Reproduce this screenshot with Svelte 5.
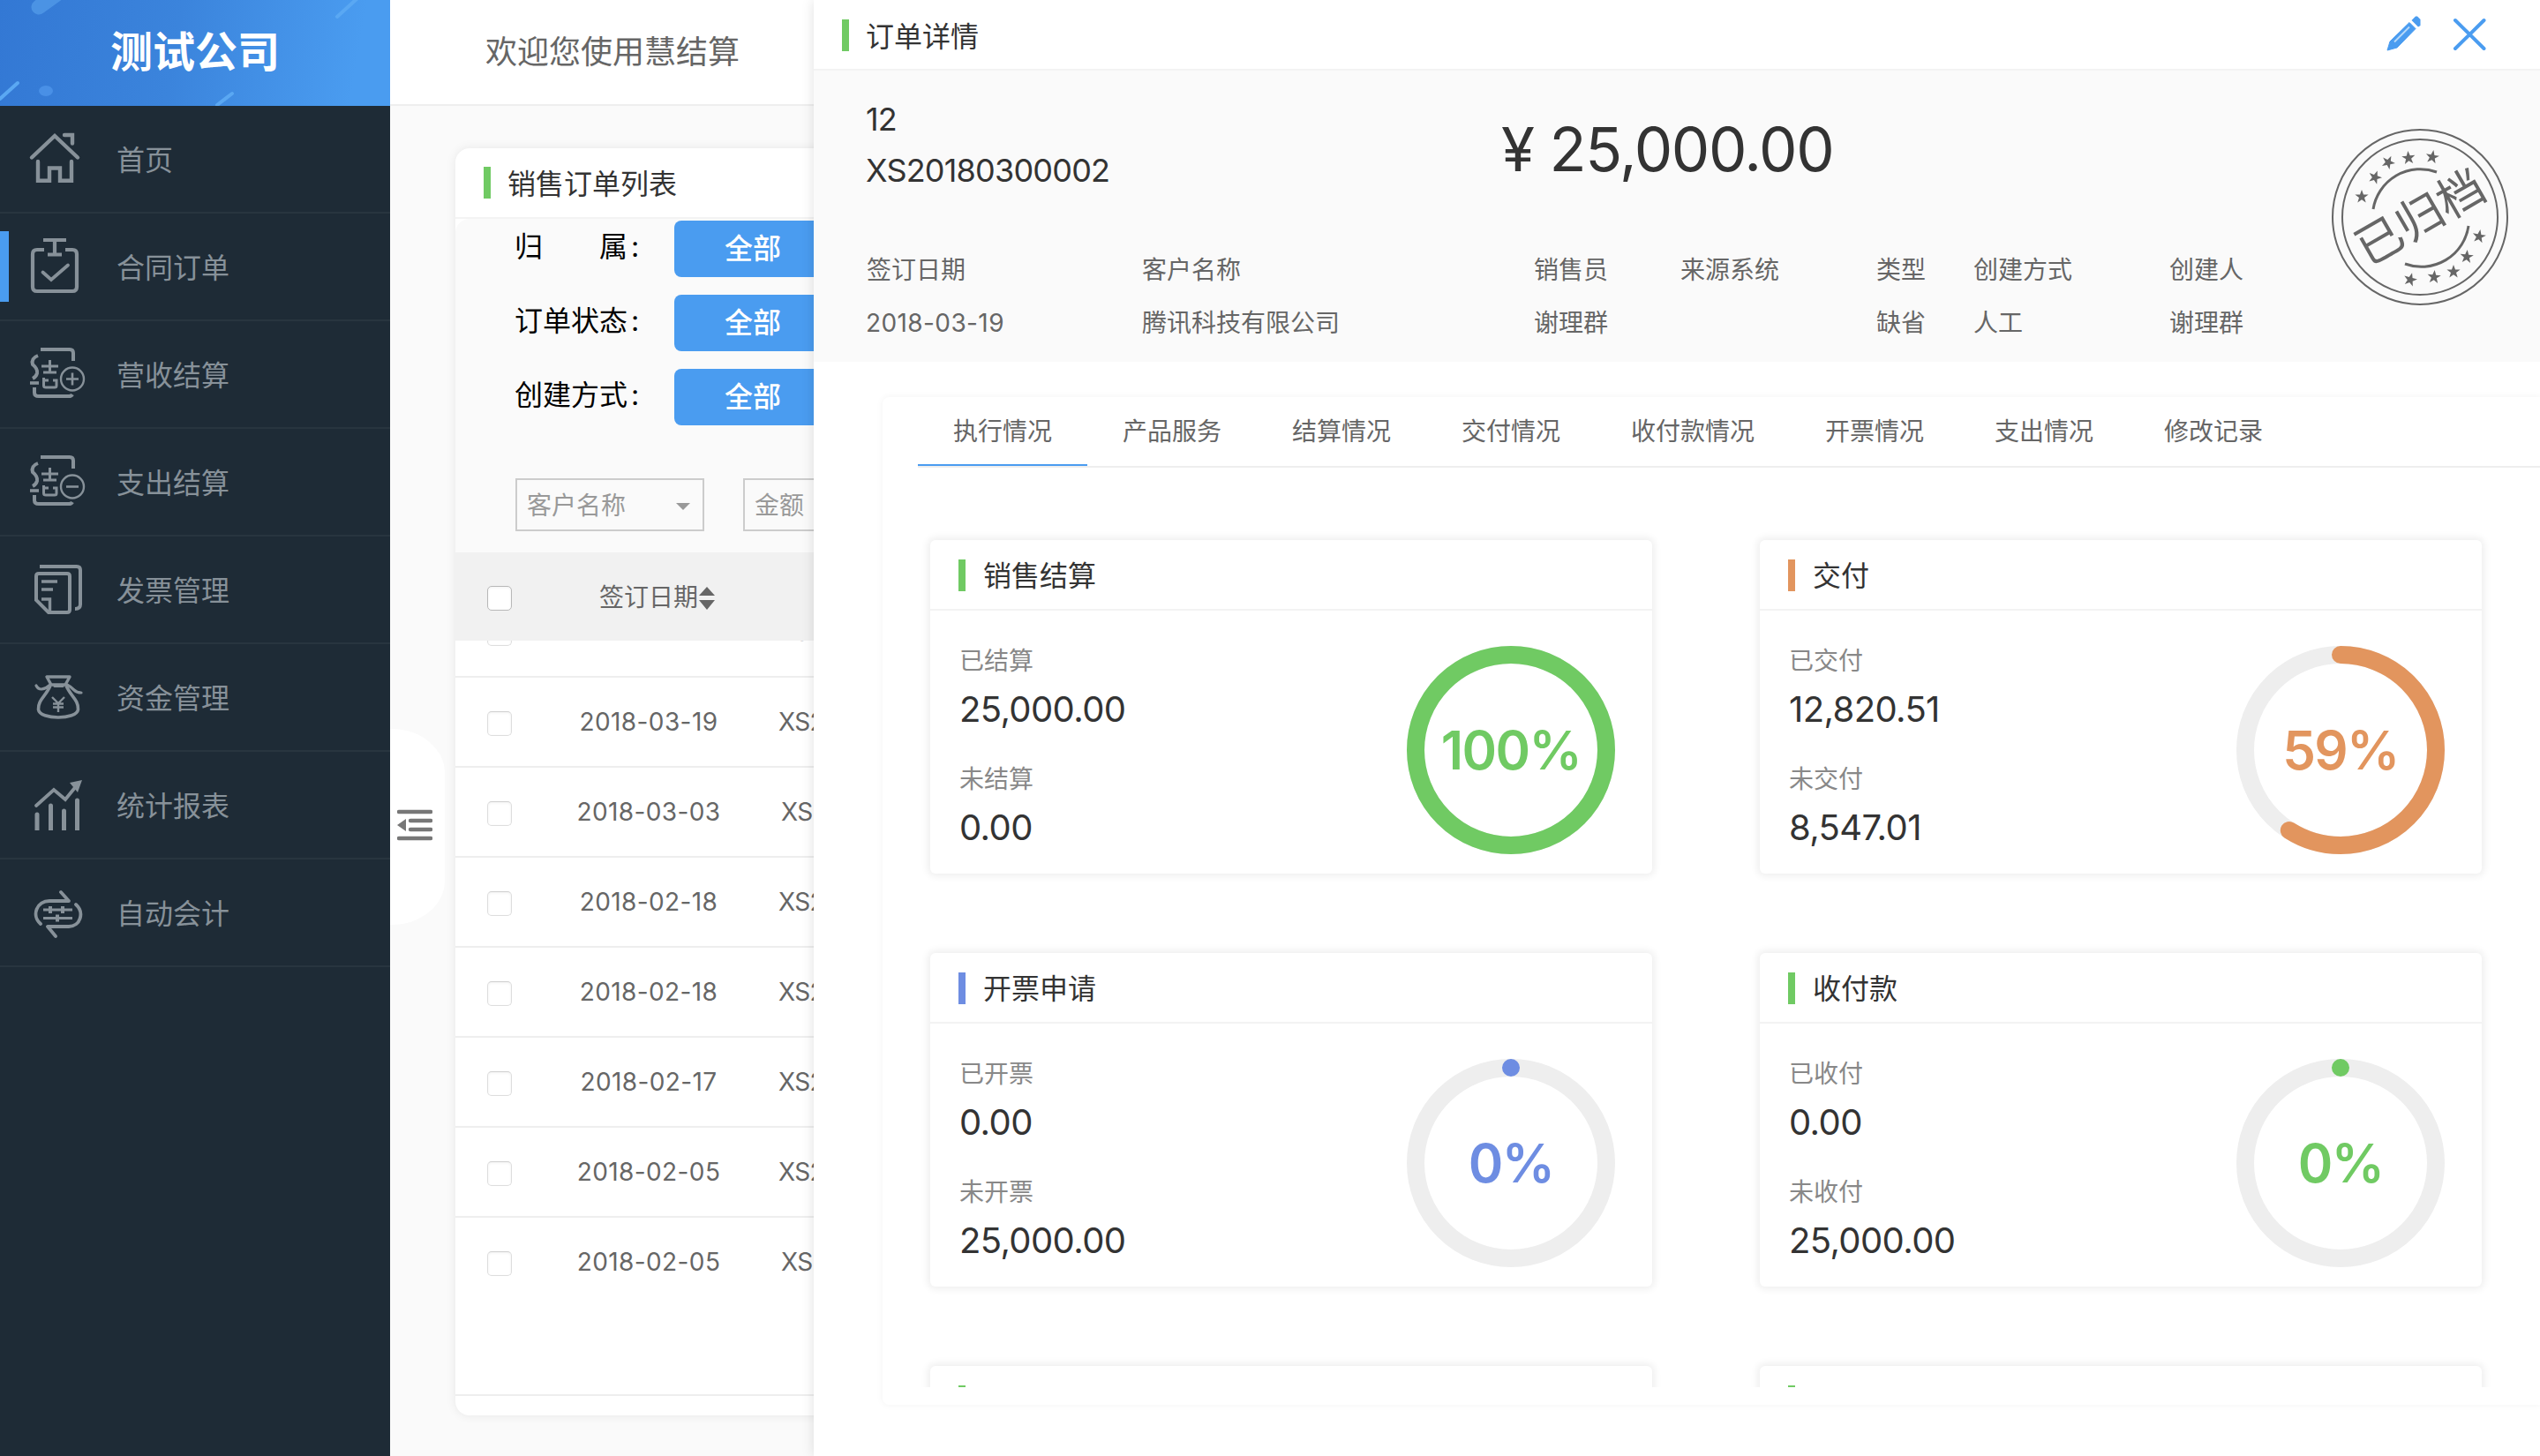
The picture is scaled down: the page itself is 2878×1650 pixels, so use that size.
<script>
  const menu = [
    { label: '首页', icon: 'home' },
    { label: '合同订单', icon: 'contract', active: true },
    { label: '营收结算', icon: 'income' },
    { label: '支出结算', icon: 'expense' },
    { label: '发票管理', icon: 'invoice' },
    { label: '资金管理', icon: 'fund' },
    { label: '统计报表', icon: 'report' },
    { label: '自动会计', icon: 'auto' },
  ];
  const filters = [
    { label: '归属', split: true },
    { label: '订单状态' },
    { label: '创建方式' },
  ];
  const rows = [
    { date: '2018-03-19', no: 'XS20180300002' },
    { date: '2018-03-19', no: 'XS20180300002' },
    { date: '2018-03-03', no: 'XS20180300001', shift: true },
    { date: '2018-02-18', no: 'XS20180200004' },
    { date: '2018-02-18', no: 'XS20180200003' },
    { date: '2018-02-17', no: 'XS20180200002' },
    { date: '2018-02-05', no: 'XS20180200005' },
    { date: '2018-02-05', no: 'XS20180200001', shift: true },
  ];
  const fields = [
    { k: '签订日期', v: '2018-03-19', num: true },
    { k: '客户名称', v: '腾讯科技有限公司' },
    { k: '销售员', v: '谢理群' },
    { k: '来源系统', v: '' },
    { k: '类型', v: '缺省' },
    { k: '创建方式', v: '人工' },
    { k: '创建人', v: '谢理群' },
  ];
  const tabs = ['执行情况', '产品服务', '结算情况', '交付情况', '收付款情况', '开票情况', '支出情况', '修改记录'];
  const cards = [
    { title: '销售结算', a: '已结算', av: '25,000.00', b: '未结算', bv: '0.00', pct: 100, tone: 'green' },
    { title: '交付', a: '已交付', av: '12,820.51', b: '未交付', bv: '8,547.01', pct: 59, tone: 'orange' },
    { title: '开票申请', a: '已开票', av: '0.00', b: '未开票', bv: '25,000.00', pct: 0, tone: 'blue' },
    { title: '收付款', a: '已收付', av: '0.00', b: '未收付', bv: '25,000.00', pct: 0, tone: 'green' },
    { title: '', tone: 'green' },
    { title: '', tone: 'green' },
  ];
  const R = 108;
  const C = 2 * Math.PI * R;
  const dash = (p) => `${Math.max((C * p) / 100, 0.01)} ${C * 2}`;
  // star centres inside the 200x200 stamp, with rotation
  const stars = [
    [34, 77, 0], [49, 55, 20], [64, 38, 25], [87, 33, -5], [114, 32, 10],
    [167, 122, 10], [153, 145, 5], [138, 162, 0], [116, 168, 5], [89, 171, 15],
  ];
</script>

{#snippet knot()}
  <path d="M46 -1H79Q83 -1 83 3V12" transform="translate(0 1)" stroke-width="4" />
  <path d="M43 7Q35 10 37 17Q43 22 42 27Q41 31 37 33" stroke-width="4" />
  <path d="M34 38H44" stroke-width="3.6" />
  <path d="M39 43V49Q39 53 44 53H78Q81 53 82 51" stroke-width="4" />
  <path d="M47 19H66M56.500 12V26M49 26H64" stroke-width="3" />
  <path d="M49.500 32V41Q49.500 43 52 43H62Q64 43 64 41V35H60M49.500 35H55" stroke-width="3" />
  <circle cx="82" cy="33.500" r="13" stroke-width="2.400" />
{/snippet}

<div class="app">
  <aside class="side">
    <div class="brand">
      <svg class="deco" viewBox="0 0 442 120">
        <path d="M44 8L66 -8" stroke="#4b93e4" stroke-width="17" stroke-linecap="round" />
        <path d="M382 19L404 -1M246 119L263 106M0 112L20 94" stroke="#5aa8f3" stroke-width="4" stroke-linecap="round" />
        <ellipse cx="52" cy="103" rx="8" ry="6" fill="#4990e6" />
      </svg>
      <span>测试公司</span>
    </div>
    {#each menu as m}
      <div class="item" class:active={m.active}>
        <svg class="mi" viewBox="30 0 70 62" fill="none">
          {#if m.icon === 'home'}
            <path d="M36 29.500L62 5L88 29.500" stroke-width="4.400" stroke-linecap="round" />
            <path d="M73 4H82V13.500" stroke-width="4.400" stroke-linecap="round" />
            <path d="M43 34V55.800H56V41.500H68V55.800H81V34" stroke-width="4.400" stroke-linecap="round" />
          {:else if m.icon === 'contract'}
            <path d="M50 12H42Q37 12 37 17V54Q37 59 42 59H82Q87 59 87 54V17Q87 12 82 12H74" stroke-width="4.200" />
            <path d="M49 1H75M62 1V17.500M54 17.500H70" stroke-width="4.200" />
            <path d="M48.500 37.500L58 46L77 29.500" stroke-width="3.800" stroke-linecap="round" />
          {:else if m.icon === 'income'}
            <g transform="translate(0 3)">{@render knot()}<path d="M75 33.500H89M82 26.500V40.500" stroke-width="2.600" /></g>
          {:else if m.icon === 'expense'}
            <g transform="translate(0 3)">{@render knot()}<path d="M75 33.500H89" stroke-width="2.600" /></g>
          {:else if m.icon === 'invoice'}
            <path d="M45 5H87Q91 5 91 9V48Q91 53 85 53" stroke-width="4" />
            <path d="M44 13H76Q79 13 79 16V54Q79 57 76 57H55L41 43V16Q41 13 44 13Z" stroke-width="4" />
            <path d="M47 22H65M47 31H60M47 42H56.500V55" stroke-width="3.400" />
          {:else if m.icon === 'fund'}
            <path d="M53 8H79L74 17H58Z" stroke-width="3.400" stroke-linejoin="round" />
            <path d="M57 18C52 30 43 34 43.500 45C45 57 87 57 88.500 45C89 34 80 30 75 18" stroke-width="3.600" />
            <path d="M62 18.500H71M41 18Q43 22 47 22Q53 21 57 17M76 17Q80 19 84 23Q87 26 92 26" stroke-width="3.200" stroke-linecap="round" />
            <path d="M59 31L66 38L73 31M60 38.500H72M60 42.500H72M66 38V48" stroke-width="2.400" />
          {:else if m.icon === 'report'}
            <path d="M42 60V42M57.500 60V32M72.500 60V38M87.500 60V26" stroke-width="5" stroke-linecap="round" />
            <path d="M41 32L61 14L74 25L87 9" stroke-width="3.800" stroke-linecap="round" />
            <path d="M93 3L79 6L88 17Z" fill="#879199" stroke="none" />
            <rect x="36" y="60" width="60" height="5" fill="#1e2b36" stroke="none" />
          {:else}
            <g transform="translate(0 -4)">
              <path d="M46 48C35 38 42 22 56 22H78L69 12M63 62L54 51H78C91 51 96 35 86 26" stroke-width="3.800" stroke-linecap="round" stroke-linejoin="round" />
              <path d="M49 32H82M49 41.500H82" stroke-width="3" />
              <path d="M57 28V36M71 28V36M65 37.500V45.500" stroke-width="4" />
            </g>
          {/if}
        </svg>
        <span>{m.label}</span>
      </div>
    {/each}
  </aside>

  <main class="main">
    <header class="welcome">欢迎您使用慧结算</header>
    <section class="list">
      <h2 class="head"><i class="bar green"></i><span>销售订单列表</span></h2>
      <div class="filters">
        {#each filters as f}
          <div class="filter">
            <span class="flabel">{#if f.split}<b>归</b><b>属</b>{:else}<b>{f.label}</b>{/if}</span>
            <span class="colon">:</span>
            <button class="all">全部</button>
          </div>
        {/each}
        <div class="selects">
          <div class="select"><span>客户名称</span><svg viewBox="0 0 16 8"><path d="M0 0H16L8 8Z" fill="#999" /></svg></div>
          <div class="select"><span>金额</span></div>
        </div>
      </div>
      <div class="thead">
        <i class="check dark"></i>
        <span class="th">签订日期<svg viewBox="0 0 18 26"><path d="M9 0L18 10H0ZM9 26L0 15H18Z" fill="#666" /></svg></span>
      </div>
      <div class="tbody">
        <div class="scroll">
          {#each rows as r}
            <div class="row">
              <i class="check"></i>
              <span class="date">{r.date}</span>
              <span class="no" class:shift={r.shift}>{r.no}</span>
            </div>
          {/each}
        </div>
      </div>
      <div class="foot"></div>
    </section>
    <div class="toggle">
      <svg viewBox="0 0 40 36"><path d="M2 3H38M15 13H38M15 23H38M2 33H38" stroke="#777" stroke-width="4.400" stroke-linecap="round" /><path d="M0 18L10 11V25Z" fill="#777" /></svg>
    </div>
  </main>

  <section class="drawer">
    <header class="dhead">
      <i class="bar green"></i><span class="dtitle">订单详情</span>
      <svg class="pen" viewBox="0 0 40 40">
        <path d="M1 39L4 29L26 7.500L33 14.500L12 36Z" fill="#4a9cf0" stroke="#4a9cf0" stroke-width="1" stroke-linejoin="round" />
        <path d="M28.500 5L33 0.500H35L38.500 4V11L36 12.500Z" fill="#4a9cf0" />
        <path d="M9 29.500L26 12.500" stroke="#b9daf9" stroke-width="1.800" />
      </svg>
      <svg class="close" viewBox="0 0 40 40"><path d="M3 4L35.500 36M35.500 4L3 36" stroke="#4a9cf0" stroke-width="4" stroke-linecap="round" /></svg>
    </header>
    <div class="summary">
      <div class="top">
        <div class="ids"><span>12</span><span>XS20180300002</span></div>
        <div class="amount">¥ 25,000.00</div>
      </div>
      <div class="fields">
        {#each fields as f}
          <div class="field"><span>{f.k}</span><span class:num={f.num}>{f.v}</span></div>
        {/each}
      </div>
      <svg class="stamp" viewBox="0 0 200 200" fill="none" stroke="#666">
        <circle cx="100" cy="100" r="99" stroke-width="2" />
        <circle cx="100" cy="100" r="88" stroke-width="2" />
        <path d="M47 91A54 54 0 0 1 119 49M83 153A54 54 0 0 0 155 110" stroke-width="3" />
        {#each stars as [x, y, a]}
          <path transform="translate({x} {y}) rotate({a})" fill="#666" stroke="none" d="M0 -8L2 -2.500L7.600 -2.500L3 1L4.700 6.500L0 3.200L-4.700 6.500L-3 1L-7.600 -2.500L-2 -2.500Z" />
        {/each}
        <text x="100" y="119" transform="rotate(-30 100 100)" text-anchor="middle" fill="#666" stroke="none">已归档</text>
      </svg>
    </div>
    <div class="panel">
      <nav class="tabs">
        {#each tabs as t, i}<span class:on={i === 0}>{t}</span>{/each}
      </nav>
      <div class="cards">
        {#each cards as c}
          <article class="card {c.tone}">
            <h3><i class="bar"></i><span>{c.title}</span></h3>
            {#if c.a}
              <div class="body">
                <div class="nums">
                  <span class="k">{c.a}</span><span class="v">{c.av}</span>
                  <span class="k">{c.b}</span><span class="v">{c.bv}</span>
                </div>
                <div class="donut">
                  <svg viewBox="0 0 236 236" fill="none" stroke-width="20">
                    <circle cx="118" cy="118" r={R} stroke="#eee" />
                    <circle cx="118" cy="118" r={R} stroke="currentColor" stroke-linecap="round" stroke-dasharray={dash(c.pct)} transform="rotate(-90 118 118)" />
                  </svg>
                  <span>{c.pct}%</span>
                </div>
              </div>
            {/if}
          </article>
        {/each}
      </div>
    </div>
  </section>
</div>

<style>
  :global(body) { margin: 0; overflow: hidden; }
  .app {
    position: relative; display: flex; width: 2878px; height: 1650px; overflow: hidden;
    background: #fafafa; color: #333; font-family: Inter, 'Noto Sans CJK SC', sans-serif; font-size: 28px;
  }
  .app * { box-sizing: border-box; }
  svg { display: block; flex: none; }
  span, h2, h3 { white-space: nowrap; }

  .side { width: 442px; flex: none; background: #1e2b36; }
  .brand {
    position: relative; height: 120px; display: flex; align-items: center; justify-content: center;
    background: linear-gradient(100deg, #3378d4 0%, #3b84dc 45%, #4a9cf0 90%);
    color: #fff; font-size: 48px; font-weight: 700; line-height: 116px; padding-bottom: 2px;
  }
  .brand span { position: relative; }
  .deco { position: absolute; inset: 0; width: 442px; height: 120px; }
  .item {
    position: relative; height: 122px; border-bottom: 2px solid #28353f; display: flex; align-items: center;
    padding-left: 30px; gap: 32px; color: #879199; font-size: 32px;
  }
  .item span { padding-bottom: 3px; }
  .item.active::before { content: ''; position: absolute; left: 0; top: 20px; width: 10px; height: 80px; background: #4a9cf0; }
  .mi { width: 70px; height: 62px; stroke: #879199; overflow: visible; }

  .main { position: relative; width: 2436px; flex: none; }
  .welcome { height: 120px; border-bottom: 2px solid #eee; background: #fff; padding-left: 108px; font-size: 36px; line-height: 118px; color: #666; }
  .list { margin: 48px 0 0 74px; height: 1436px; border-radius: 16px; background: #fff; box-shadow: 0 0 12px rgba(0, 0, 0, .08); overflow: hidden; display: flex; flex-direction: column; }
  .head { margin: 0; height: 80px; border-bottom: 2px solid #f3f3f3; padding-left: 32px; display: flex; align-items: center; gap: 19px; font-size: 32px; font-weight: 400; flex: none; }
  .head span { padding-bottom: 2px; }
  .bar { width: 8px; height: 36px; flex: none; background: currentColor; }
  .bar.green { background: #70ca63; }
  .filters { height: 378px; flex: none; border-radius: 16px 0 0 0; background: #fafafa; padding: 2px 0 0 68px; }
  .filter { display: flex; height: 64px; margin-bottom: 20px; color: #000; font-size: 32px; line-height: 60px; }
  .flabel { width: 128px; margin-left: -1px; display: flex; justify-content: space-between; }
  .flabel b { font-weight: 400; }
  .colon { width: 53px; padding-left: 4px; }
  .all { width: 178px; height: 64px; border: 0; border-radius: 8px; background: #4a9cf0; color: #fff; font: 500 32px/62px Inter, 'Noto Sans CJK SC', sans-serif; padding: 0; }
  .selects { display: flex; gap: 44px; padding-top: 40px; }
  .filters .selects { margin-top: 0; padding-top: 40px; }
  .select { width: 214px; height: 60px; border: 2px solid #ccc; padding: 0 14px 0 11px; display: flex; align-items: center; justify-content: space-between; color: #999; }
  .select span { padding-bottom: 2px; }
  .select svg { width: 16px; height: 8px; margin-top: 4px; }
  .thead { height: 100px; flex: none; background: #f1f1f1; display: flex; align-items: center; color: #666; padding-left: 36px; }
  .check { width: 28px; height: 28px; border: 1px solid #ddd; border-top-color: #d0d0d0; border-radius: 5px; background: #fff; box-shadow: inset 0 1px 3px rgba(0, 0, 0, .06); flex: none; margin-top: 4px; }
  .check.dark { border-color: #b8b8b8; }
  .th { display: flex; align-items: center; margin-left: 99px; gap: 1px; padding-bottom: 2px; }
  .th svg { width: 18px; height: 26px; margin-top: 5px; }
  .tbody { height: 854px; flex: none; overflow: hidden; }
  .scroll { margin-top: -60px; }
  .row { height: 102px; border-bottom: 2px solid #eee; display: flex; align-items: center; padding-left: 36px; color: #666; }
  .row:last-child { border-color: transparent; }
  .date { width: 310px; text-align: center; letter-spacing: .4px; }
  .no { margin-left: -8px; letter-spacing: -.6px; }
  .no.shift { margin-left: -5px; }
  .foot { border-top: 2px solid #eee; flex: 1; }
  .toggle { position: absolute; left: 0; top: 826px; width: 62px; height: 222px; background: #fff; border-radius: 0 60px 60px 0 / 0 50px 50px 0; display: flex; align-items: center; padding-left: 8px; }
  .toggle svg { width: 40px; height: 36px; margin-top: -4px; }

  .drawer { position: absolute; left: 922px; top: 0; width: 1956px; height: 1650px; background: #fff; box-shadow: 0 0 14px rgba(0, 0, 0, .12); }
  .dhead { height: 80px; border-bottom: 2px solid #f3f3f3; display: flex; align-items: center; padding: 2px 59px 0 32px; }
  .dtitle { margin-left: 19px; font-size: 32px; flex: 1; padding-bottom: 2px; }
  .pen { width: 40px; height: 40px; margin-right: 35px; margin-top: -4px; }
  .close { width: 40px; height: 40px; margin-top: -2px; }
  .summary { position: relative; height: 330px; background: #fafafa; padding: 26px 0 0 60px; }
  .top { display: flex; height: 170px; }
  .ids { width: 718px; display: flex; flex-direction: column; font-size: 36px; line-height: 58px; letter-spacing: -.8px; margin-left: -1px; padding-right: 1px; }
  .amount { font-size: 69px; line-height: 126px; white-space: pre; letter-spacing: -1.4px; margin-left: 2px; }
  .fields { display: grid; grid-template-columns: 312px 444px 166px 222px 110px 222px 200px; color: #666; }
  .field { display: flex; flex-direction: column; line-height: 60px; }
  .field .num { letter-spacing: .4px; margin-left: -1px; }
  .stamp { position: absolute; left: 1720px; top: 66px; width: 200px; height: 200px; }
  .stamp text { font: 400 53px 'Noto Sans CJK SC', sans-serif; }
  .panel { margin: 40px 0 0 78px; height: 1142px; border-radius: 8px 0 0 8px; box-shadow: 0 0 8px rgba(0, 0, 0, .05); padding-left: 40px; }
  .tabs { height: 80px; border-bottom: 2px solid #eee; display: flex; color: #666; line-height: 78px; }
  .tabs span { padding: 0 40px; height: 78px; }
  .tabs .on { border-bottom: 2px solid #4a9cf0; }
  .cards { height: 1042px; overflow: hidden; padding: 82px 0 0 14px; display: grid; grid-template-columns: 818px 818px; grid-auto-rows: 378px; gap: 90px 122px; }
  .card { border-radius: 6px; box-shadow: 0 0 8px 3px rgba(0, 0, 0, .065); }
  .card.green { color: #70ca63; }
  .card.orange { color: #e2955e; }
  .card.blue { color: #6e8de2; }
  .card h3 { margin: 0; height: 80px; border-bottom: 2px solid #f3f3f3; padding: 1px 0 0 32px; display: flex; align-items: center; gap: 20px; font-size: 32px; font-weight: 400; color: #333; }
  .card h3 span { padding-bottom: 3px; }
  .green .bar { background: #70ca63; }
  .orange .bar { background: #e2955e; }
  .blue .bar { background: #6e8de2; }
  .body { display: flex; justify-content: space-between; padding: 28px 42px 0 33px; }
  .nums { display: flex; flex-direction: column; padding-top: 2px; }
  .k { color: #888; line-height: 54px; }
  .v { color: #333; font-size: 40px; line-height: 56px; margin-bottom: 24px; letter-spacing: -.6px; }
  .donut { position: relative; width: 236px; height: 236px; margin-top: 12px; }
  .donut span { position: absolute; inset: 0; text-align: center; font-size: 60px; font-weight: 600; line-height: 236px; letter-spacing: -1.6px; }
</style>
